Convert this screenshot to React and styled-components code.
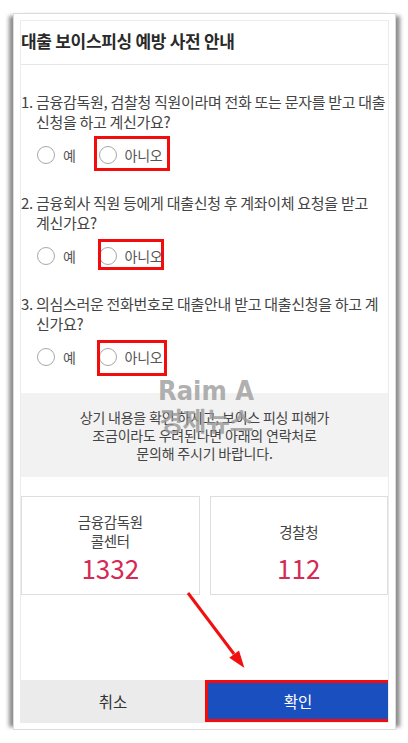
import React from "react";
import styled, { createGlobalStyle } from "styled-components";

const GlobalStyle = createGlobalStyle`
  body {
    margin: 0;
    background: #fff;
    font-family: "Noto Sans CJK KR", "Noto Sans", sans-serif;
  }
`;

const questions = [
  {
    no: "1.",
    lines: ["금융감독원, 검찰청 직원이라며 전화 또는 문자를 받고 대출", "신청을 하고 계신가요?"],
    box: { left: -5, right: -8, top: -10, bottom: -7 },
  },
  {
    no: "2.",
    lines: ["금융회사 직원 등에게 대출신청 후 계좌이체 요청을 받고", "계신가요?"],
    box: { left: -1, right: -2, top: -8, bottom: -5 },
  },
  {
    no: "3.",
    lines: ["의심스러운 전화번호로 대출안내 받고 대출신청을 하고 계", "신가요?"],
    box: { left: -2, right: -5, top: -8, bottom: -10 },
  },
];

export default function App() {
  return (
    <>
      <GlobalStyle />
      <Frame>
        <Panel>
          <Header>
            <h1>대출 보이스피싱 예방 사전 안내</h1>
          </Header>

          <Questions>
            {questions.map((q) => (
              <Question key={q.no}>
                <QuestionText>
                  <span>
                    {q.no} {q.lines[0]}
                  </span>
                  <span>{q.lines[1]}</span>
                </QuestionText>
                <RadioRow>
                  <Option>
                    <Circle />
                    예
                  </Option>
                  <Option>
                    <Circle />
                    아니오
                    <Highlight $box={q.box} />
                  </Option>
                </RadioRow>
              </Question>
            ))}
          </Questions>

          <Notice>
            상기 내용을 확인 하시고, 보이스 피싱 피해가
            <br />
            조금이라도 우려된다면 아래의 연락처로
            <br />
            문의해 주시기 바랍니다.
          </Notice>

          <Contacts>
            <Card>
              <CardLabel>
                금융감독원
                <br />
                콜센터
              </CardLabel>
              <CardNumber>1332</CardNumber>
            </Card>
            <Card>
              <CardLabel>경찰청</CardLabel>
              <CardNumber>112</CardNumber>
            </Card>
          </Contacts>

          <Buttons>
            <Button>취소</Button>
            <Button $primary>확인</Button>
          </Buttons>

          <Watermark>
            <b>Raim A</b>
            <span>경제뉴스</span>
          </Watermark>

          <Arrow viewBox="0 0 366 701">
            <line x1="167" y1="572" x2="213" y2="633" stroke="#f01010" strokeWidth="3" />
            <polygon points="222,645 209.6,636.8 217.6,630.8" fill="#f01010" stroke="#f01010" strokeWidth="1.5" />
          </Arrow>
        </Panel>
      </Frame>
    </>
  );
}

const Frame = styled.div`
  box-sizing: border-box;
  margin: 13px 0 0 13px;
  width: 383px;
  height: 717px;
  padding: 6px;
  border: 1px solid #dcdcdc;
  background: #fff;
  box-shadow: -7px 0 4px -3px rgba(0, 0, 0, 0.45), 7px 0 4px -3px rgba(0, 0, 0, 0.45);
`;

const Panel = styled.div`
  position: relative;
  box-sizing: border-box;
  width: 369px;
  height: 703px;
  border: 1px solid #ececec;
  display: flex;
  flex-direction: column;
  background: #fff;
`;

const Header = styled.div`
  height: 44px;
  padding-bottom: 5px;
  box-sizing: border-box;
  display: flex;
  align-items: center;
  border-bottom: 1px solid #e6e6e6;

  h1 {
    margin: 0;
    font-size: 17px;
    font-weight: 700;
    letter-spacing: -0.3px;
    color: #2a2a2a;
  }
`;

const Questions = styled.div`
  padding-top: 27px;
`;

const Question = styled.div`
  margin-bottom: 23px;

  &:last-child {
    margin-bottom: 0;
  }
`;

const QuestionText = styled.div`
  display: flex;
  flex-direction: column;
  font-size: 15px;
  line-height: 20px;
  letter-spacing: -0.3px;
  color: #444;
  white-space: nowrap;

  span + span {
    padding-left: 15px;
  }
`;

const RadioRow = styled.div`
  display: flex;
  align-items: center;
  height: 30px;
  margin-top: 8px;
  padding-left: 16px;
  gap: 23px;
`;

const Option = styled.label`
  position: relative;
  display: flex;
  align-items: center;
  gap: 8px;
  height: 18px;
  font-size: 14px;
  letter-spacing: -0.3px;
  color: #555;
`;

const Circle = styled.span`
  box-sizing: border-box;
  width: 18px;
  height: 18px;
  border-radius: 50%;
  border: 1.5px solid #a8a8a8;
  background: #fff;
`;

const Highlight = styled.span`
  position: absolute;
  left: ${(p) => p.$box.left}px;
  right: ${(p) => p.$box.right}px;
  top: ${(p) => p.$box.top}px;
  bottom: ${(p) => p.$box.bottom}px;
  border: 3px solid #f20c0c;
`;

const Notice = styled.div`
  margin-top: 21px;
  padding: 15px 0;
  background: #f2f2f2;
  text-align: center;
  font-size: 14px;
  line-height: 18px;
  letter-spacing: -0.2px;
  color: #444;
`;

const Contacts = styled.div`
  display: grid;
  grid-template-columns: 1fr 1fr;
  gap: 10px;
  margin-top: 19px;
`;

const Card = styled.div`
  box-sizing: border-box;
  height: 99px;
  padding-top: 14px;
  border: 1px solid #dedede;
  display: flex;
  flex-direction: column;
  align-items: center;
`;

const CardLabel = styled.div`
  height: 40px;
  display: flex;
  flex-direction: column;
  justify-content: center;
  text-align: center;
  font-size: 14.5px;
  line-height: 19px;
  letter-spacing: -0.3px;
  color: #444;
`;

const CardNumber = styled.div`
  margin-top: 2px;
  font-size: 26px;
  line-height: 30px;
  color: #d42a55;
`;

const Buttons = styled.div`
  margin-top: auto;
  display: grid;
  grid-template-columns: 184px 1fr;
  height: 42px;
`;

const Button = styled.div`
  box-sizing: border-box;
  display: flex;
  align-items: center;
  justify-content: center;
  font-size: 15.5px;
  color: ${(p) => (p.$primary ? "#fff" : "#333")};
  background: ${(p) => (p.$primary ? "#1a4fc0" : "#ebebeb")};
  border: ${(p) => (p.$primary ? "3px solid #f20c0c" : "none")};
  border-right: none;
`;

const Watermark = styled.div`
  position: absolute;
  left: 130px;
  top: 355px;
  width: 110px;
  display: flex;
  flex-direction: column;
  align-items: center;
  pointer-events: none;
  color: rgba(165, 165, 165, 0.9);

  b {
    font-family: "DejaVu Sans Condensed", "DejaVu Sans", sans-serif;
    font-size: 27px;
    line-height: 30px;
    font-weight: 700;
  }

  span {
    font-size: 26px;
    line-height: 28px;
    font-weight: 700;
    letter-spacing: -0.5px;
    color: rgba(150, 150, 150, 0.8);
  }
`;

const Arrow = styled.svg`
  position: absolute;
  left: 0;
  top: 0;
  width: 366px;
  height: 701px;
  pointer-events: none;
`;
